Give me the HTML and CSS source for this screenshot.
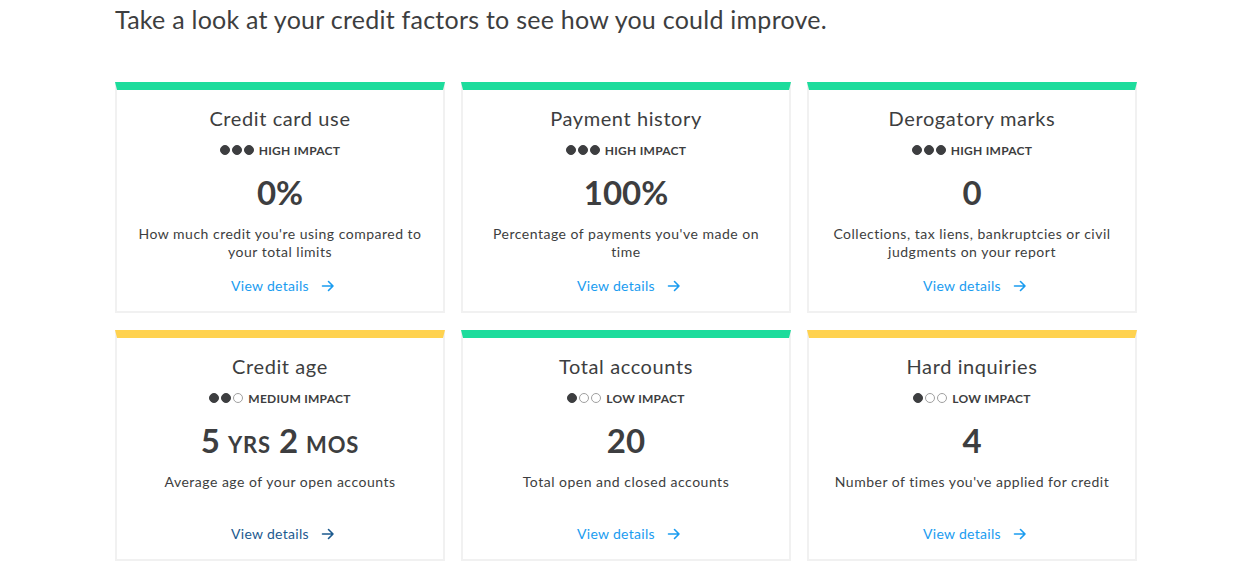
FILE: index.html
```html
<!DOCTYPE html>
<html>
<head>
<meta charset="utf-8">
<link rel="stylesheet" href="styles.css">
</head>
<body>
<div class="page">
  <h1 class="intro">Take a look at your credit factors to see how you could improve.</h1>
  <div class="grid">
    <div class="card green">
      <div class="title">Credit card use</div>
      <div class="impact"><span class="dot on"></span><span class="dot on"></span><span class="dot on"></span><span class="label">HIGH IMPACT</span></div>
      <div class="value">0%</div>
      <div class="desc">How much credit you're using compared to your total limits</div>
      <a class="link" href="#">View details <svg class="arrow" viewBox="0 0 14 14"><path d="M1.5 7h10.5M7.5 2.5L12 7l-4.5 4.5"/></svg></a>
    </div>
    <div class="card green">
      <div class="title">Payment history</div>
      <div class="impact"><span class="dot on"></span><span class="dot on"></span><span class="dot on"></span><span class="label">HIGH IMPACT</span></div>
      <div class="value">100%</div>
      <div class="desc">Percentage of payments you've made on time</div>
      <a class="link" href="#">View details <svg class="arrow" viewBox="0 0 14 14"><path d="M1.5 7h10.5M7.5 2.5L12 7l-4.5 4.5"/></svg></a>
    </div>
    <div class="card green">
      <div class="title">Derogatory marks</div>
      <div class="impact"><span class="dot on"></span><span class="dot on"></span><span class="dot on"></span><span class="label">HIGH IMPACT</span></div>
      <div class="value">0</div>
      <div class="desc">Collections, tax liens, bankruptcies or civil judgments on your report</div>
      <a class="link" href="#">View details <svg class="arrow" viewBox="0 0 14 14"><path d="M1.5 7h10.5M7.5 2.5L12 7l-4.5 4.5"/></svg></a>
    </div>
    <div class="card yellow">
      <div class="title">Credit age</div>
      <div class="impact"><span class="dot on"></span><span class="dot on"></span><span class="dot"></span><span class="label">MEDIUM IMPACT</span></div>
      <div class="value">5 <span class="unit">YRS</span> 2 <span class="unit">MOS</span></div>
      <div class="desc">Average age of your open accounts</div>
      <a class="link hover" href="#">View details <svg class="arrow" viewBox="0 0 14 14"><path d="M1.5 7h10.5M7.5 2.5L12 7l-4.5 4.5"/></svg></a>
    </div>
    <div class="card green">
      <div class="title">Total accounts</div>
      <div class="impact"><span class="dot on"></span><span class="dot"></span><span class="dot"></span><span class="label">LOW IMPACT</span></div>
      <div class="value">20</div>
      <div class="desc">Total open and closed accounts</div>
      <a class="link" href="#">View details <svg class="arrow" viewBox="0 0 14 14"><path d="M1.5 7h10.5M7.5 2.5L12 7l-4.5 4.5"/></svg></a>
    </div>
    <div class="card yellow">
      <div class="title">Hard inquiries</div>
      <div class="impact"><span class="dot on"></span><span class="dot"></span><span class="dot"></span><span class="label">LOW IMPACT</span></div>
      <div class="value">4</div>
      <div class="desc">Number of times you've applied for credit</div>
      <a class="link" href="#">View details <svg class="arrow" viewBox="0 0 14 14"><path d="M1.5 7h10.5M7.5 2.5L12 7l-4.5 4.5"/></svg></a>
    </div>
  </div>
</div>
</body>
</html>
```

FILE: styles.css
```css
html, body {
  margin: 0;
  padding: 0;
  background: #ffffff;
}
body {
  font-family: Lato, "Noto Sans", sans-serif;
  color: #3d3e40;
}
.page {
  padding-left: 115px;
  width: 1022px;
}
.intro {
  margin: 0;
  padding-top: 4px;
  font-size: 25px;
  font-weight: 400;
  line-height: 30px;
  letter-spacing: 0.25px;
  color: #3d3e40;
}
.grid {
  margin-top: 48px;
  display: grid;
  grid-template-columns: repeat(3, 330px);
  column-gap: 16px;
  row-gap: 17px;
}
.card {
  display: flex;
  flex-direction: column;
  align-items: center;
  text-align: center;
  border: 2px solid #f1f1f1;
  border-top: 8px solid #1ddc9c;
  padding: 17px 18px 16px;
  height: 231px;
  box-sizing: border-box;
}
.card.yellow {
  border-top-color: #ffd24f;
}
.title {
  font-size: 20px;
  line-height: 22px;
  letter-spacing: 0.6px;
}
.impact {
  margin-top: 12px;
  display: flex;
  align-items: center;
  height: 18px;
}
.dot {
  width: 10px;
  height: 10px;
  border-radius: 50%;
  box-sizing: border-box;
  border: 1px solid #a0a0a0;
  margin-right: 2px;
}
.dot.on {
  background: #3d3e40;
  border-color: #3d3e40;
}
.label {
  margin-left: 3px;
  font-size: 12px;
  font-weight: 700;
  letter-spacing: 0.25px;
}
.value {
  margin-top: 15px;
  font-size: 33px;
  font-weight: 700;
  line-height: 36px;
  height: 36px;
}
.unit {
  font-size: 22px;
  line-height: 20px;
  letter-spacing: 0.8px;
}
.desc {
  margin-top: 15px;
  font-size: 14px;
  line-height: 18px;
  letter-spacing: 0.5px;
  max-width: 290px;
}
.link {
  margin-top: auto;
  padding-left: 6px;
  font-size: 14px;
  line-height: 18px;
  letter-spacing: 0.3px;
  color: #1a9cf0;
  text-decoration: none;
  display: flex;
  align-items: center;
}
.link.hover {
  color: #1c5a8f;
}
.arrow {
  width: 14px;
  height: 14px;
  margin-left: 12px;
  fill: none;
  stroke: currentColor;
  stroke-width: 1.6;
  stroke-linecap: round;
  stroke-linejoin: round;
}
```
